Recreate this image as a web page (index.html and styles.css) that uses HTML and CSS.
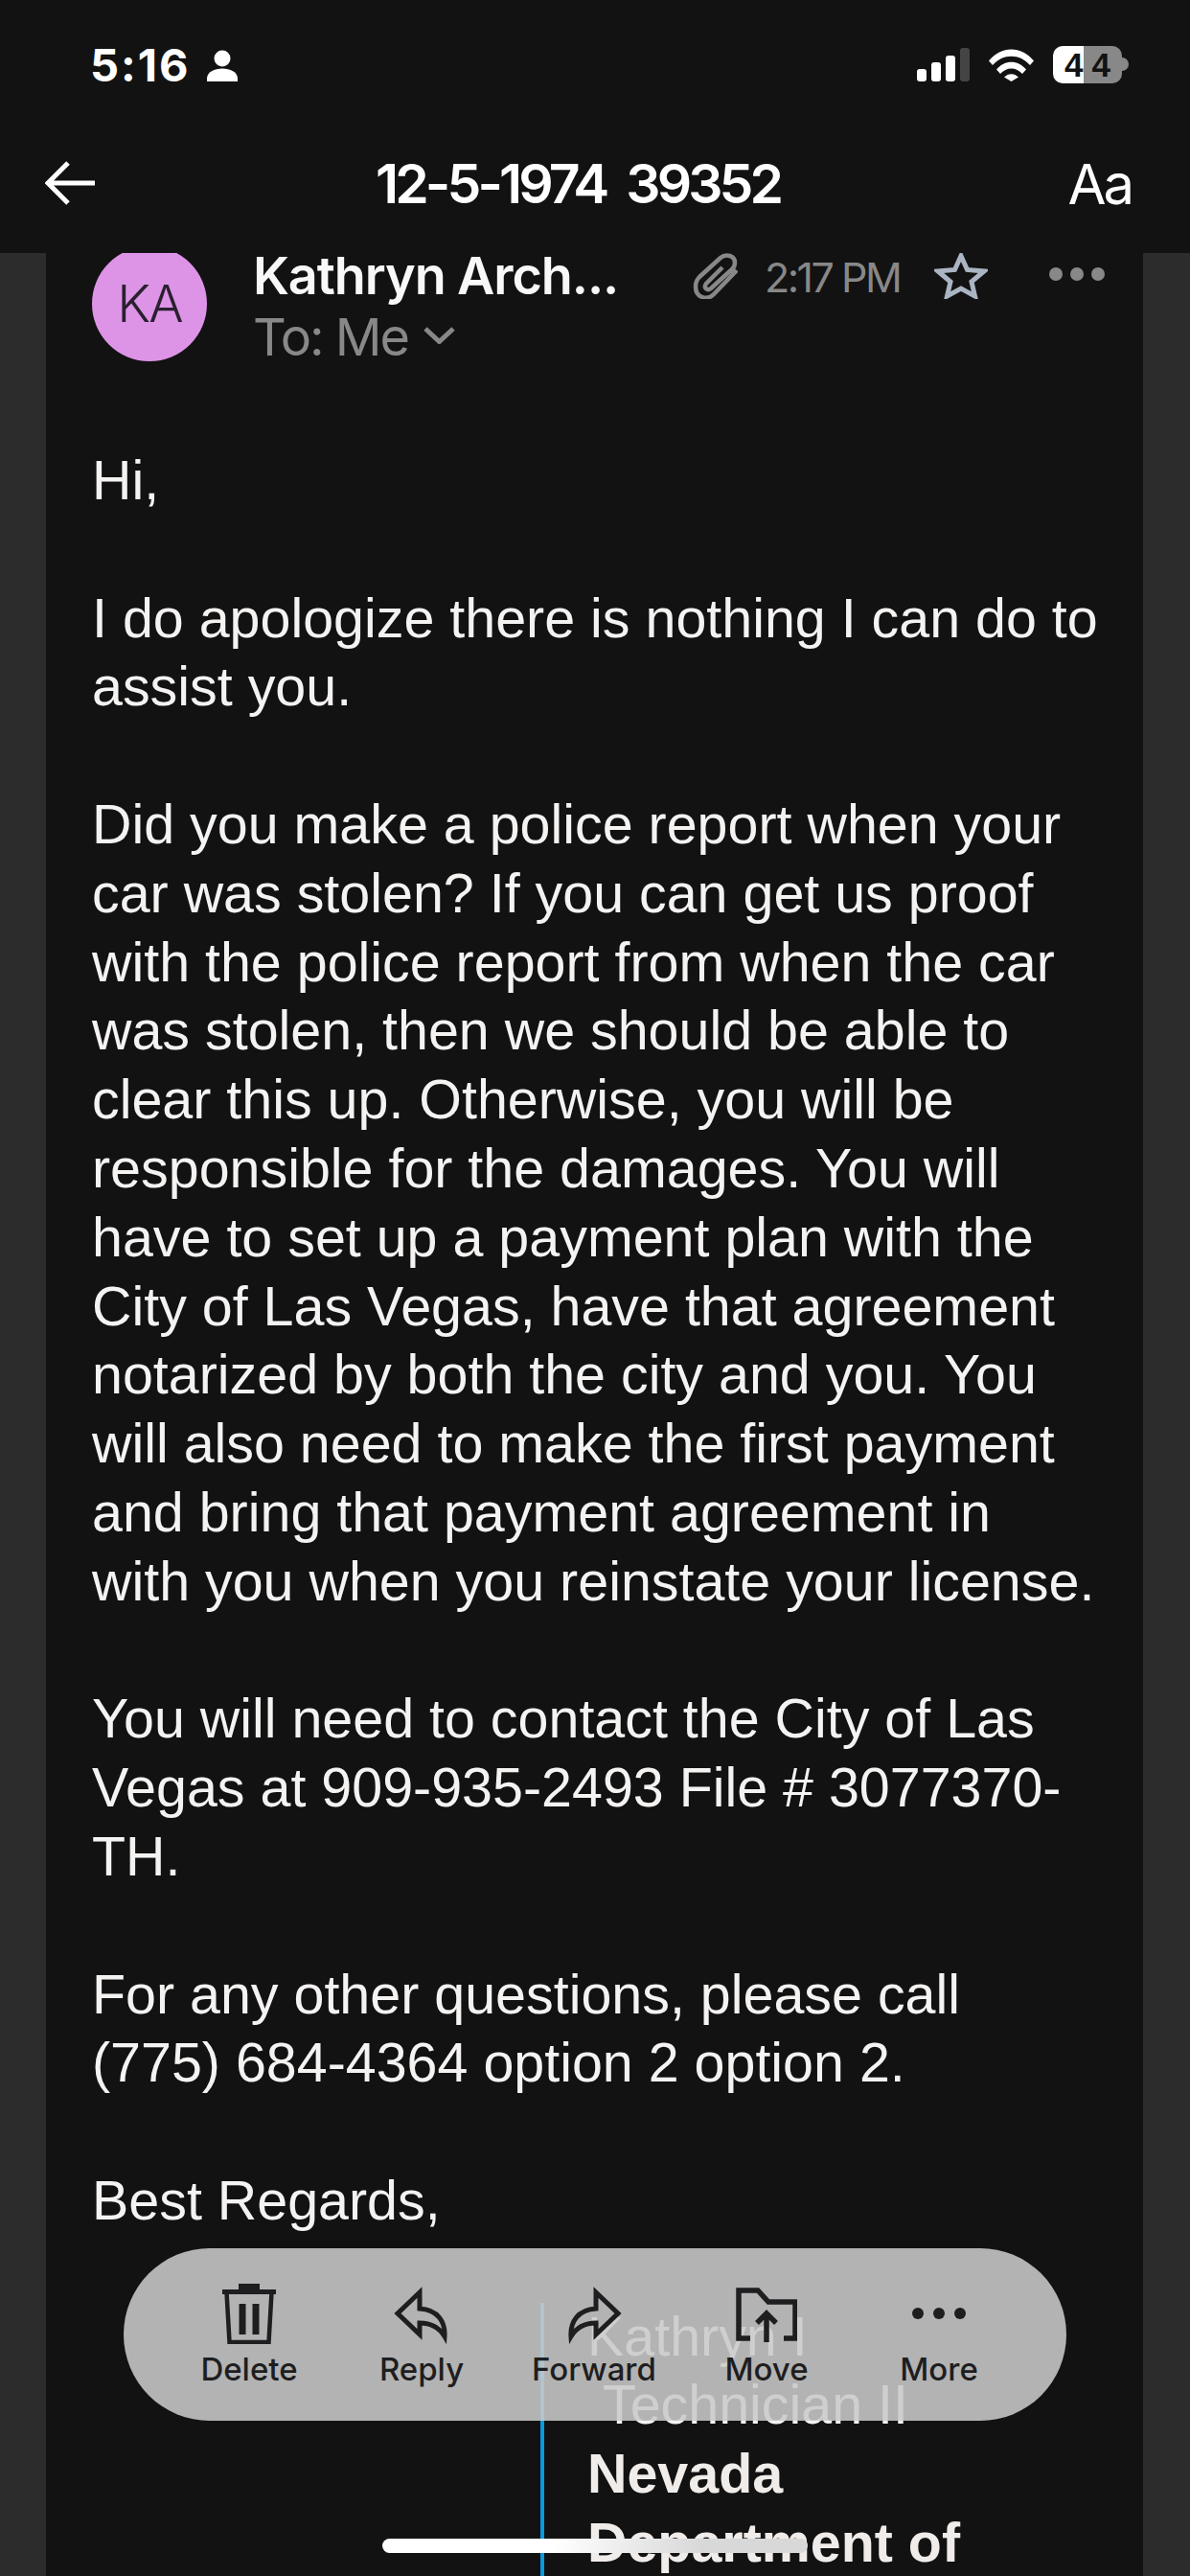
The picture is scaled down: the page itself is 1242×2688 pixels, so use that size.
FILE: index.html
```html
<!DOCTYPE html>
<html lang="en">
<head>
<meta charset="utf-8">
<title>12-5-1974 39352</title>
<link rel="stylesheet" href="styles.css">
</head>
<body>
<div class="screen">
  <header class="top">
    <div class="status">
      <div class="status-left">
        <span class="clock">5:16</span>
        <svg class="person" viewBox="0 0 32 33"><circle cx="16" cy="9" r="8.5"/><path d="M0 33v-3C0 23 8 19.500 16 19.500S32 23 32 30v3z"/></svg>
      </div>
      <div class="status-right">
        <div class="signal"><i class="b1"></i><i class="b2"></i><i class="b3"></i><i class="b4"></i></div>
        <svg class="wifi" viewBox="0 0 47 35"><path d="M0 13.500C13 -2.500 34 -2.500 47 13.500L43 18C32.500 5.500 14.500 5.500 4 18z"/><path d="M8 22.500C16.500 12 30.500 12 39 22.500L35 27C28.500 19.500 18.500 19.500 12 27z"/><path d="M16 30.500C20.500 26 26.500 26 31 30.500L23.500 35z"/></svg>
        <div class="battery"><span class="batt-num">44</span></div>
        <i class="nub"></i>
      </div>
    </div>
    <nav class="nav">
      <svg class="back" viewBox="0 0 53 46"><path d="M52 23H4M24 2L3 23l21 21" fill="none" stroke="#fff" stroke-width="5"/></svg>
      <h1 class="title">12-5-1974&nbsp; 39352</h1>
      <span class="aa">Aa</span>
    </nav>
  </header>

  <main class="layout">
    <article class="card">
      <div class="sender">
        <div class="avatar">KA</div>
        <div class="who">
          <div class="name">Kathryn Arch...</div>
          <div class="to">To: Me
            <svg class="chev" viewBox="0 0 33 18"><path d="M2 2l14.500 13.500L31 2" fill="none" stroke="#888" stroke-width="5"/></svg>
          </div>
        </div>
        <svg class="clip" viewBox="0 0 47 48"><path d="M46 18L22 43C15 50 3 47 3 35C3 31 4 28 7 25L29 5C35 0 44 3 44 10C44 13 43 15 41 17L19 37C15 40 11 36 14 32L31 15" fill="none" stroke="#888" stroke-width="4.500"/></svg>
        <span class="time">2:17 PM</span>
        <svg class="star" viewBox="0 0 56 48"><path d="M28 3l6.500 14.500L52 19 39 30l3.500 15L28 37 13.500 45 17 30 4 19l17.500-1.500z" fill="none" stroke="#aab4c2" stroke-width="5"/></svg>
        <div class="dots"><i></i><i></i><i></i></div>
      </div>

      <div class="message">
        <p>Hi,</p>
        <p>I do apologize there is nothing I can do to assist you.</p>
        <p>Did you make a police report when your car was stolen? If you can get us proof with the police report from when the car was stolen, then we should be able to clear this up. Otherwise, you will be responsible for the damages. You will have to set up a payment plan with the City of Las Vegas, have that agreement notarized by both the city and you. You will also need to make the first payment and bring that payment agreement in with you when you reinstate your license.</p>
        <p>You will need to contact the City of Las Vegas at 909-935-2493 File # 3077370-TH.</p>
        <p>For any other questions, please call<br>(775) 684-4364 option 2 option 2.</p>
        <p>Best Regards,</p>
        <div class="signature">
          <div>Kathryn I</div>
          <div>&nbsp;Technician II</div>
          <div class="strong">Nevada</div>
          <div class="strong">Department of</div>
        </div>
      </div>
    </article>
  </main>

  <div class="toolbar">
    <div class="tool">
      <svg viewBox="0 0 64 64"><path d="M4 12h56V7H4zM21 7V1h22v6" fill="#1e1e20"/><path d="M8.500 10l3 52h41l3-52" fill="none" stroke="#1e1e20" stroke-width="4.500"/><path d="M25 22v32M39 22v32" stroke="#1e1e20" stroke-width="7" fill="none"/></svg>
      <span>Delete</span>
    </div>
    <div class="tool">
      <svg viewBox="0 0 64 64"><path d="M30 10L7 32l23 22V42c12 0 20 4 26 14 1-15-7-28-26-29z" fill="none" stroke="#1e1e20" stroke-width="5"/></svg>
      <span>Reply</span>
    </div>
    <div class="tool">
      <svg viewBox="0 0 64 64"><path d="M34 10l23 22-23 22V42c-12 0-20 4-26 14-1-15 7-28 26-29z" fill="none" stroke="#1e1e20" stroke-width="5"/></svg>
      <span>Forward</span>
    </div>
    <div class="tool">
      <svg viewBox="0 0 64 64"><path d="M15 58H3V8h20l11 12h28v38H50" fill="none" stroke="#1e1e20" stroke-width="5.500"/><path d="M32 62V32M22 42l10-10 10 10" fill="none" stroke="#1e1e20" stroke-width="5.500"/></svg>
      <span>Move</span>
    </div>
    <div class="tool">
      <svg viewBox="0 0 64 64"><circle cx="10" cy="32" r="6" fill="#1e1e20"/><circle cx="32" cy="32" r="6" fill="#1e1e20"/><circle cx="54" cy="32" r="6" fill="#1e1e20"/></svg>
      <span>More</span>
    </div>
  </div>
  <div class="home"></div>
</div>
</body>
</html>
```
FILE: styles.css
```css
* { box-sizing: border-box; }
html, body { margin: 0; padding: 0; background: #121212; }
.screen { position: relative; width: 1242px; height: 2688px; overflow: hidden; background: #2c2c2c; color: #f5f3f2; font-family: "Liberation Sans", Arial, sans-serif; }

.top { position: relative; z-index: 2; height: 264px; background: #121212; color: #fff; font-family: Inter, sans-serif; }
.status { display: flex; justify-content: space-between; align-items: flex-start; height: 156px; padding: 48px 64px 0 94px; }
.status-left { display: flex; align-items: center; gap: 17px; height: 40px; }
.clock { font-size: 47px; line-height: 40px; font-weight: 700; letter-spacing: 2px; }
.person { width: 32px; height: 33px; fill: #fff; }
.status-right { display: flex; align-items: flex-start; }
.signal { display: flex; align-items: flex-end; gap: 5px; height: 35px; margin-top: 2px; }
.signal i { display: block; width: 10px; border-radius: 3px; background: #fff; }
.signal .b1 { height: 13px; }
.signal .b2 { height: 20px; }
.signal .b3 { height: 27px; }
.signal .b4 { height: 35px; background: #444; }
.wifi { width: 47px; height: 35px; margin: 2px 20px 0 20px; fill: #fff; }
.battery { position: relative; width: 72px; height: 39px; border-radius: 10px; background: linear-gradient(90deg, #fff 44%, #888 44%); display: flex; align-items: center; justify-content: center; }
.batt-num { font-family: "Liberation Sans", sans-serif; font-size: 35px; font-weight: 700; color: #121212; letter-spacing: 9px; margin-right: -9px; }
.nub { display: block; width: 7px; height: 14px; margin-top: 12px; border-radius: 0 7px 7px 0; background: #888; }
.nav { display: flex; align-items: center; justify-content: space-between; height: 72px; padding: 0 61px 0 47px; position: relative; }
.back { width: 53px; height: 46px; margin-top: -2px; }
.title { position: absolute; left: 392px; top: 0; margin: 0; font-size: 57px; line-height: 72px; font-weight: 600; letter-spacing: -3.900px; white-space: nowrap; }
.aa { font-size: 58px; line-height: 72px; font-weight: 400; letter-spacing: -3px; }

.layout { padding: 0 49px 0 48px; }
.card { background: #121212; height: 2424px; }
.sender { display: flex; align-items: flex-start; height: 154px; padding-left: 48px; }
.avatar { flex: none; width: 120px; height: 120px; margin-top: -7px; border-radius: 50%; background: #dd94e6; color: #2a2030; font: 300 54px/120px Inter, sans-serif; text-align: center; letter-spacing: -2px; }
.who { width: 327px; margin-left: 48px; margin-top: -4px; font-family: Inter, sans-serif; }
.name { font-size: 54px; line-height: 56px; font-weight: 600; color: #f8f8f8; letter-spacing: -1.100px; white-space: nowrap; }
.to { display: flex; align-items: center; gap: 16px; margin-top: 8px; font-size: 54px; line-height: 56px; color: #888; letter-spacing: -2px; white-space: nowrap; }
.chev { width: 33px; height: 18px; margin-top: -4px; }
.clip { flex: none; width: 47px; height: 48px; margin-left: 132px; }
.time { flex: none; width: 139px; margin-left: 28px; font: 400 43px/50px Inter, sans-serif; color: #888; letter-spacing: -2.500px; white-space: nowrap; }
.star { flex: none; width: 56px; height: 48px; margin-left: 38px; }
.dots { flex: none; display: flex; gap: 8px; margin: 15px 0 0 64px; }
.dots i { display: block; width: 14px; height: 14px; border-radius: 50%; background: #888; }

.message { padding: 48px 44px 0 48px; font-size: 57.400px; line-height: 71.800px; }
.message p { margin: 0 0 71.800px; }
.signature { border-left: 4px solid #0a9ae0; padding-left: 45px; margin-left: 468px; margin-top: -2px; }
.signature div { white-space: nowrap; }
.strong { font-weight: 700; color: #f0ecea; }

.toolbar { position: absolute; z-index: 3; left: 129px; top: 2346px; width: 984px; height: 180px; padding: 36px 43px 0 41px; border-radius: 90px; background: rgba(202, 202, 202, .88); display: grid; grid-template-columns: repeat(5, 180px); }
.tool { display: flex; flex-direction: column; align-items: center; color: #1e1e20; font: 500 33px/40px Inter, sans-serif; }
.tool svg { width: 64px; height: 64px; margin-bottom: 6px; }

.home { position: absolute; z-index: 4; left: 399px; top: 2649px; width: 444px; height: 15px; border-radius: 8px; background: linear-gradient(90deg, #fff 40%, #d8d8d8 75%); }
```
